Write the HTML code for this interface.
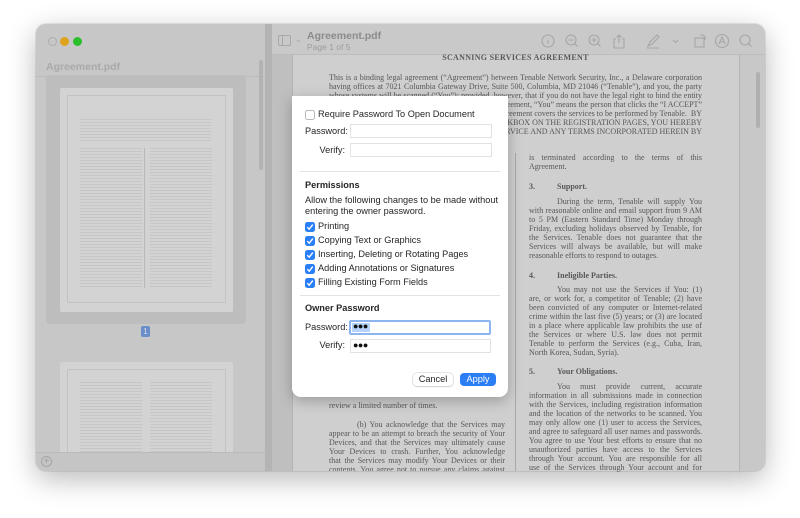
<!DOCTYPE html>
<html><head><meta charset="utf-8"><style>
*{margin:0;padding:0;box-sizing:border-box}
body{width:800px;height:518px;background:#fff;position:relative;overflow:hidden;font-family:"Liberation Sans",sans-serif}
.a{position:absolute}
#win{left:36px;top:24px;width:729px;height:447px;border-radius:10px;background:#c8c8c8;overflow:hidden;box-shadow:0 8px 28px rgba(0,0,0,.28),0 0 0 1px rgba(0,0,0,.08)}
.doc{font-family:"Liberation Serif",serif;font-size:8px;color:#575757;line-height:9px;white-space:nowrap}
.j{white-space:normal;text-align:justify;text-align-last:justify;height:9px;overflow:hidden}
.r{display:flex;justify-content:flex-end;overflow:hidden}
.r span{flex:none}
.sh{font-size:9.2px;color:#262626;white-space:nowrap;line-height:11px}
.cb{width:10px;height:10px;border-radius:2.5px;background:#2b7ff6}
.cb svg{position:absolute;left:1px;top:1px}
.fld{background:#fff;border:1px solid #e2e2e2}
.thumbl{background:repeating-linear-gradient(#c6c6c6 0 1px,transparent 1px 3px)}
</style></head><body>
<div id="win" class="a">
 <div class="a" style="left:0;top:0;width:230px;height:447px;background:#c7c7c7"></div>
 <div class="a" style="left:12px;top:13px;width:9px;height:9px;border-radius:50%;border:1px solid #adadad"></div>
 <div class="a" style="left:24px;top:13px;width:9px;height:9px;border-radius:50%;background:#dfa21d"></div>
 <div class="a" style="left:37px;top:13px;width:9px;height:9px;border-radius:50%;background:#2cbf2c"></div>
 <div class="a" style="left:10px;top:37px;font-size:10.5px;font-weight:bold;color:#a9a9a9">Agreement.pdf</div>
 <div class="a" style="left:0;top:52px;width:230px;height:1px;background:#bcbcbc"></div>
 <div class="a" style="left:10px;top:51px;width:200px;height:249px;border-radius:4px;background:#bdbdbd"></div>
 <div class="a" style="left:24px;top:64px;width:173px;height:224px;background:#d3d3d3;border-radius:2px"></div>
 <div class="a" style="left:31px;top:71px;width:159px;height:208px;border:1px solid #c2c2c2"></div>
 <div class="a thumbl" style="left:44px;top:95px;width:131px;height:24px"></div>
 <div class="a thumbl" style="left:44px;top:124px;width:62px;height:140px"></div>
 <div class="a thumbl" style="left:114px;top:124px;width:62px;height:140px"></div>
 <div class="a" style="left:108px;top:124px;width:1px;height:140px;background:#b8b8b8"></div>
 <div class="a" style="left:105px;top:302px;width:9px;height:11px;background:#6a8ec9;border-radius:2px;color:#dde;font-size:8px;text-align:center;line-height:11px">1</div>
 <div class="a" style="left:24px;top:338px;width:173px;height:120px;background:#d3d3d3;border-radius:2px"></div>
 <div class="a" style="left:31px;top:345px;width:159px;height:120px;border:1px solid #c2c2c2"></div>
 <div class="a thumbl" style="left:44px;top:358px;width:62px;height:70px"></div>
 <div class="a thumbl" style="left:114px;top:358px;width:62px;height:70px"></div>
 <div class="a" style="left:223px;top:36px;width:4px;height:110px;border-radius:2px;background:#b3b3b3"></div>
 <div class="a" style="left:0;top:428px;width:230px;height:19px;background:#c5c5c5;border-top:1px solid #bababa"></div>
 <div class="a" style="left:5px;top:432px;width:11px;height:11px;border-radius:50%;border:1px solid #a5a5a5;color:#a0a0a0;font-size:10px;line-height:9px;text-align:center">+</div>
 <div class="a" style="left:229px;top:0;width:7px;height:447px;background:#b4b4b4"></div>
 <div class="a" style="left:236px;top:0;width:493px;height:31px;background:#c9c9c9;border-bottom:1px solid #bdbdbd"></div>
 <div class="a" style="left:242px;top:11px;width:13px;height:11px;border:1px solid #a8a8a8;border-radius:2px"></div>
 <div class="a" style="left:246px;top:11px;width:1px;height:11px;background:#a8a8a8"></div>
 <div class="a" style="left:259px;top:11px;font-size:8px;color:#a8a8a8">⌄</div>
 <div class="a" style="left:271px;top:6px;font-size:10.5px;font-weight:bold;color:#8b8b8b">Agreement.pdf</div>
 <div class="a" style="left:271px;top:18px;font-size:8.5px;color:#9c9c9c">Page 1 of 5</div>
 <svg class="a" style="left:500px;top:8px" width="229" height="18" viewBox="0 0 229 18" fill="none" stroke="#a6a6a6" stroke-width="1.1">
  <circle cx="12" cy="9" r="6"/><path d="M12 8v4M12 6v.5"/>
  <circle cx="35" cy="8" r="5"/><path d="M38.5 11.5l3 3M32.5 8h5"/>
  <circle cx="58" cy="8" r="5"/><path d="M61.5 11.5l3 3M55.5 8h5M58 5.5v5"/>
  <path d="M80 7h-2v9h10V7h-2M83 3v8M80.5 5.5L83 3l2.5 2.5"/>
  <path d="M112 14l2-4 7-7 2 2-7 7z M111 16h12"/>
  <path d="M137 8l2.5 2.5L142 8" />
  <rect x="159" y="6" width="9" height="9"/><path d="M164 3h3l2 2v3"/>
  <circle cx="186" cy="9" r="6.5"/><path d="M183 12l3-7 3 7M184 10h4"/>
  <circle cx="209" cy="8" r="5"/><path d="M212.5 11.5l3 3"/>
 </svg>
 <div class="a" style="left:236px;top:31px;width:20px;height:416px;background:#bfbfbf"></div>
 <div class="a" style="left:256px;top:31px;width:448px;height:416px;background:#cfcfcf;border-left:1px solid #b5b5b5;border-right:1px solid #b5b5b5"></div>
 <div class="a" style="left:704px;top:31px;width:25px;height:416px;background:#c8c8c8"></div>
 <div class="a" style="left:720px;top:48px;width:4px;height:56px;border-radius:2px;background:#b0b0b0"></div>
</div>
<div class="a doc" style="left:329px;top:53px;width:373px;text-align:center;font-weight:bold;letter-spacing:.3px">SCANNING SERVICES AGREEMENT</div>
<div class="a doc j" style="left:329px;top:73px;width:373px">This is a binding legal agreement (“Agreement”) between Tenable Network Security, Inc., a Delaware corporation</div>
<div class="a doc j" style="left:329px;top:82px;width:373px">having offices at 7021 Columbia Gateway Drive, Suite 500, Columbia, MD 21046 (“Tenable”), and you, the party</div>
<div class="a doc j" style="left:329px;top:91px;width:373px">whose systems will be scanned (“You”); provided, however, that if you do not have the legal right to bind the entity</div>
<div class="a doc r" style="left:329px;top:100px;width:373px"><span>on whose behalf you accept this Agreement. For purposes of this Agreement, “You” means the person that clicks the “I ACCEPT”</span></div>
<div class="a doc r" style="left:329px;top:109px;width:373px"><span>button or checkbox on the registration pages. This Agreement covers the services to be performed by Tenable.&nbsp; BY</span></div>
<div class="a doc r" style="left:329px;top:118px;width:373px"><span>CLICKING THE “I ACCEPT” BUTTON OR CHECKBOX ON THE REGISTRATION PAGES, YOU HEREBY</span></div>
<div class="a doc r" style="left:329px;top:127px;width:373px"><span>AGREE TO THE FOLLOWING TERMS OF SERVICE AND ANY TERMS INCORPORATED HEREIN BY</span></div>
<div class="a" style="left:515px;top:153px;width:1px;height:318px;background:#a9a9a9"></div>
<div class="a" style="left:529px;top:153px;width:173px">
<div class="doc j">is terminated according to the terms of this</div>
<div class="doc">Agreement.</div>
<div class="doc" style="margin-top:11px;font-weight:bold"><span style="display:inline-block;width:28px">3.</span>Support.</div>
<div class="doc j" style="margin-top:6px;padding-left:28px">During the term, Tenable will supply You</div>
<div class="doc j">with reasonable online and email support from 9 AM</div>
<div class="doc j">to 5 PM (Eastern Standard Time) Monday through</div>
<div class="doc j">Friday, excluding holidays observed by Tenable, for</div>
<div class="doc j">the Services.  Tenable does not guarantee that the</div>
<div class="doc j">Services will always be available, but will make</div>
<div class="doc">reasonable efforts to respond to outages.</div>
<div class="doc" style="margin-top:11px;font-weight:bold"><span style="display:inline-block;width:28px">4.</span>Ineligible Parties.</div>
<div class="doc j" style="margin-top:5px;padding-left:28px">You may not use the Services if You: (1)</div>
<div class="doc j">are, or work for, a competitor of Tenable; (2) have</div>
<div class="doc j">been convicted of any computer or Internet-related</div>
<div class="doc j">crime within the last five (5) years; or (3) are located</div>
<div class="doc j">in a place where applicable law prohibits the use of</div>
<div class="doc j">the Services or where U.S. law does not permit</div>
<div class="doc j">Tenable to perform the Services (e.g., Cuba, Iran,</div>
<div class="doc">North Korea, Sudan, Syria).</div>
<div class="doc" style="margin-top:10px;font-weight:bold"><span style="display:inline-block;width:28px">5.</span>Your Obligations.</div>
<div class="doc j" style="margin-top:6px;padding-left:28px">You must provide current, accurate</div>
<div class="doc j">information in all submissions made in connection</div>
<div class="doc j">with the Services, including registration information</div>
<div class="doc j">and the location of the networks to be scanned.  You</div>
<div class="doc j">may only allow one (1) user to access the Services,</div>
<div class="doc j">and agree to safeguard all user names and passwords.</div>
<div class="doc j">You agree to use Your best efforts to ensure that no</div>
<div class="doc j">unauthorized parties have access to the Services</div>
<div class="doc j">through Your account.  You are responsible for all</div>
<div class="doc j">use of the Services through Your account and for</div>
</div>
<div class="a" style="left:329px;top:401px;width:176px;height:70px;overflow:hidden">
<div class="doc">review a limited number of times.</div>
<div class="doc j" style="margin-top:10px;padding-left:28px">(b) You acknowledge that the Services may</div>
<div class="doc j">appear to be an attempt to breach the security of Your</div>
<div class="doc j">Devices, and that the Services may ultimately cause</div>
<div class="doc j">Your Devices to crash.  Further, You acknowledge</div>
<div class="doc j">that the Services may modify Your Devices or their</div>
<div class="doc j">contents.  You agree not to pursue any claims against</div>
</div>
<div class="a" style="left:292px;top:96px;width:216px;height:301px;background:#fff;border-radius:0 0 9px 9px;box-shadow:0 4px 14px rgba(0,0,0,.25)">
 <div class="a" style="left:13px;top:14px;width:10px;height:10px;border:1px solid #b8b8b8;border-radius:2.5px"></div>
 <div class="a sh" style="left:26px;top:13px">Require Password To Open Document</div>
 <div class="a sh" style="left:13px;top:30px">Password:</div>
 <div class="a fld" style="left:58px;top:28px;width:142px;height:14px"></div>
 <div class="a sh" style="left:13px;top:49px;width:40px;text-align:right">Verify:</div>
 <div class="a fld" style="left:58px;top:47px;width:142px;height:14px"></div>
 <div class="a" style="left:8px;top:75px;width:200px;height:1px;background:#e3e3e3"></div>
 <div class="a sh" style="left:13px;top:84px;font-weight:bold">Permissions</div>
 <div class="a sh" style="left:13px;top:99px">Allow the following changes to be made without</div>
 <div class="a sh" style="left:13px;top:110px">entering the owner password.</div>
 <div class="a cb" style="left:13px;top:126px"><svg width="8" height="8" viewBox="0 0 8 8"><path d="M1.3 4.2l1.9 2 3.6-4.6" stroke="#fff" stroke-width="1.4" fill="none"/></svg></div>
 <div class="a sh" style="left:26px;top:125px">Printing</div>
 <div class="a cb" style="left:13px;top:140px"><svg width="8" height="8" viewBox="0 0 8 8"><path d="M1.3 4.2l1.9 2 3.6-4.6" stroke="#fff" stroke-width="1.4" fill="none"/></svg></div>
 <div class="a sh" style="left:26px;top:139px">Copying Text or Graphics</div>
 <div class="a cb" style="left:13px;top:154px"><svg width="8" height="8" viewBox="0 0 8 8"><path d="M1.3 4.2l1.9 2 3.6-4.6" stroke="#fff" stroke-width="1.4" fill="none"/></svg></div>
 <div class="a sh" style="left:26px;top:153px">Inserting, Deleting or Rotating Pages</div>
 <div class="a cb" style="left:13px;top:168px"><svg width="8" height="8" viewBox="0 0 8 8"><path d="M1.3 4.2l1.9 2 3.6-4.6" stroke="#fff" stroke-width="1.4" fill="none"/></svg></div>
 <div class="a sh" style="left:26px;top:167px">Adding Annotations or Signatures</div>
 <div class="a cb" style="left:13px;top:182px"><svg width="8" height="8" viewBox="0 0 8 8"><path d="M1.3 4.2l1.9 2 3.6-4.6" stroke="#fff" stroke-width="1.4" fill="none"/></svg></div>
 <div class="a sh" style="left:26px;top:181px">Filling Existing Form Fields</div>
 <div class="a" style="left:8px;top:199px;width:200px;height:1px;background:#e3e3e3"></div>
 <div class="a sh" style="left:13px;top:207px;font-weight:bold">Owner Password</div>
 <div class="a sh" style="left:13px;top:226px">Password:</div>
 <div class="a" style="left:57px;top:224px;width:142px;height:15px;border:2px solid #8db6f0;border-radius:2px;background:#fff"></div>
 <div class="a" style="left:60px;top:227px;width:18px;height:9px;background:#b5d3fb"></div>
 <div class="a" style="left:61px;top:225px;font-size:9px;color:#111;letter-spacing:-0.5px">●●●</div>
 <div class="a sh" style="left:13px;top:244px;width:40px;text-align:right">Verify:</div>
 <div class="a fld" style="left:58px;top:243px;width:141px;height:14px"></div>
 <div class="a" style="left:61px;top:244px;font-size:9px;color:#111;letter-spacing:-0.5px">●●●</div>
 <div class="a" style="left:121px;top:277px;width:40px;height:13px;border-radius:4px;background:#fff;box-shadow:0 0 0 .5px #c8c8c8,0 1px 1px rgba(0,0,0,.15);font-size:9.2px;color:#262626;text-align:center;line-height:13px">Cancel</div>
 <div class="a" style="left:168px;top:277px;width:36px;height:13px;border-radius:4px;background:#2c7ef5;font-size:9.2px;color:#fff;text-align:center;line-height:13px">Apply</div>
</div>
</body></html>
